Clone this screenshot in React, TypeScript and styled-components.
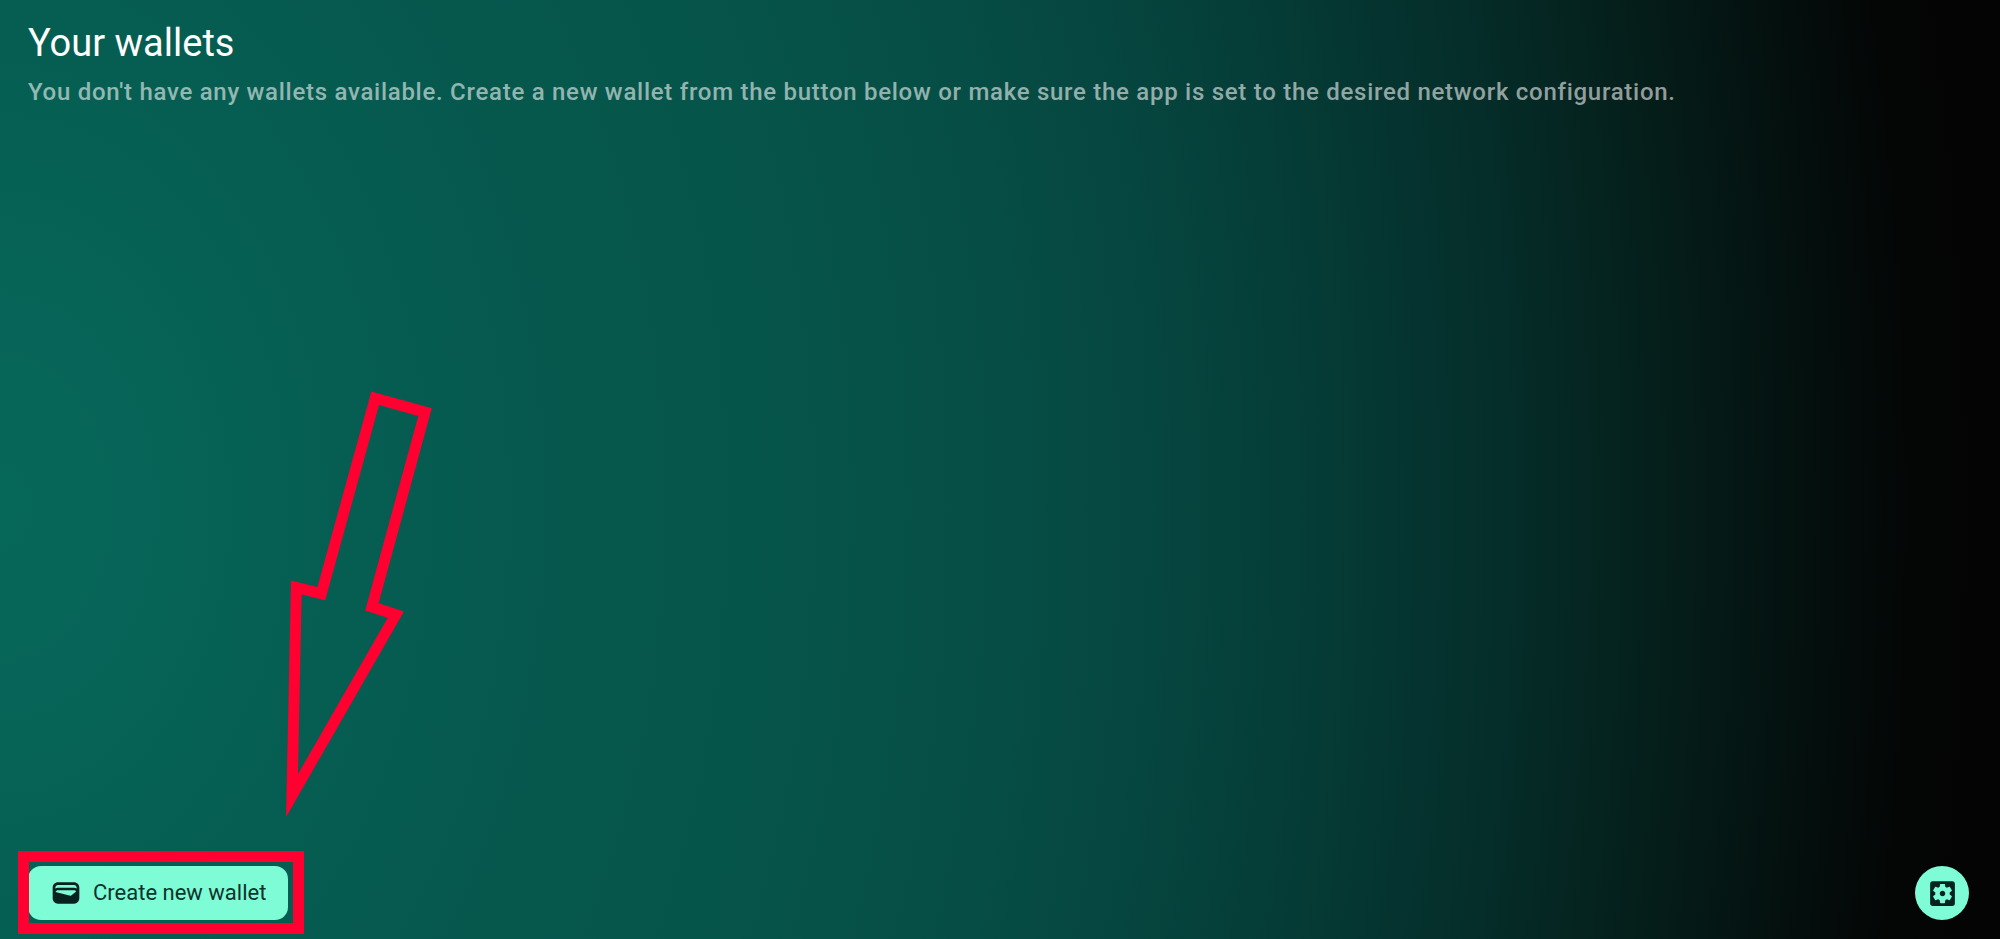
import React from "react";
import styled, { createGlobalStyle } from "styled-components";
import { MdSettingsApplications, MdWallet } from "react-icons/md";

const color = {
  accent: "#7dfcd6",
  onAccent: "#07231f",
  label: "#0d332c",
  highlight: "#ff0030",
  title: "#ffffff",
  muted: "rgba(255, 255, 255, 0.57)",
};

const GlobalStyle = createGlobalStyle`
  *, *::before, *::after {
    box-sizing: border-box;
  }

  body {
    margin: 0;
    background: #040404;
    font-family: Roboto, "Liberation Sans", sans-serif;
  }
`;

const Page = styled.div`
  position: relative;
  display: flex;
  flex-direction: column;
  justify-content: space-between;
  min-height: 100vh;
  padding: 19px 31px 19px 28px;
  background: radial-gradient(
    ellipse 100% 290% at 0 54%,
    #066859 0%,
    #066558 7%,
    #065f53 15%,
    #06594e 26%,
    #06544a 40%,
    #064e45 50%,
    #064640 58%,
    #053a35 67%,
    #052e2a 75%,
    #051f1b 83%,
    #04110f 90%,
    #040505 96%,
    #040404 100%
  );
`;

const Header = styled.header`
  display: flex;
  flex-direction: column;
  gap: 8px;
`;

const Title = styled.h1`
  margin: 0;
  color: ${color.title};
  font-size: 38px;
  font-weight: 400;
  line-height: 48px;
`;

const Message = styled.p`
  margin: 0;
  color: ${color.muted};
  font-size: 24px;
  font-weight: 500;
  line-height: 34px;
  letter-spacing: 0.03em;
`;

const Actions = styled.footer`
  display: flex;
  align-items: center;
  justify-content: space-between;
`;

const Highlighted = styled.div`
  position: relative;
`;

const HighlightFrame = styled.div`
  position: absolute;
  inset: -15px -16px -14px -10px;
  border: 11px solid ${color.highlight};
  pointer-events: none;
`;

const Button = styled.button`
  display: flex;
  align-items: center;
  justify-content: center;
  height: 54px;
  border: 0;
  background: ${color.accent};
  color: ${color.onAccent};
  font-family: inherit;
  cursor: pointer;
`;

const CreateButton = styled(Button)`
  gap: 11px;
  padding: 0 22px;
  border-radius: 13px;
  font-size: 22px;
  font-weight: 400;
  line-height: 28px;
`;

const Label = styled.span`
  color: ${color.label};
`;

const RoundButton = styled(Button)`
  width: 54px;
  padding: 0;
  border-radius: 50%;
`;

const Arrow = styled.svg`
  position: absolute;
  left: 280px;
  bottom: 119px;
  pointer-events: none;
`;

export default function App() {
  return (
    <>
      <GlobalStyle />
      <Page>
        <Header>
          <Title>Your wallets</Title>
          <Message>
            You don't have any wallets available. Create a new wallet from the
            button below or make sure the app is set to the desired network
            configuration.
          </Message>
        </Header>

        <Actions>
          <Highlighted>
            <CreateButton type="button">
              <MdWallet size={32} aria-hidden="true" />
              <Label>Create new wallet</Label>
            </CreateButton>
            <HighlightFrame />
          </Highlighted>
          <RoundButton type="button" aria-label="Settings">
            <MdSettingsApplications size={33} aria-hidden="true" />
          </RoundButton>
        </Actions>

        <Arrow
          width="160"
          height="440"
          viewBox="0 0 160 440"
          fill="none"
          stroke={color.highlight}
          strokeWidth="11"
          strokeMiterlimit="10"
          aria-hidden="true"
        >
          <path d="M95.2 18.3 145 32.2 91.9 226.8 115.8 234.7 12 415.6 16.3 207.5 41.3 213.7Z" />
        </Arrow>
      </Page>
    </>
  );
}
